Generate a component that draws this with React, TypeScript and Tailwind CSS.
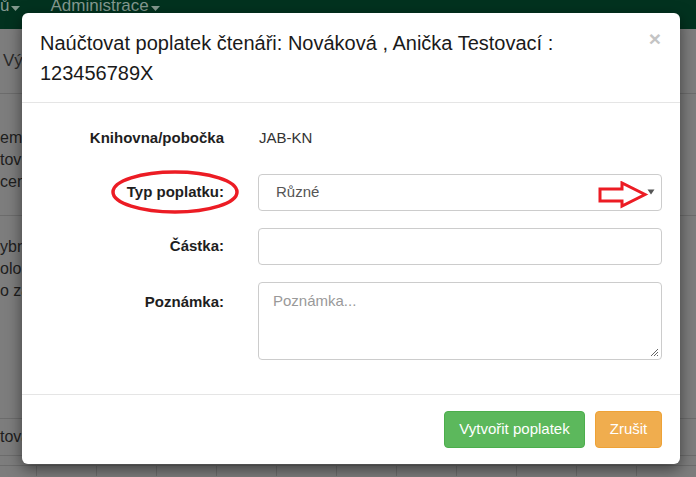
import React from "react";

function Caret() {
  return (
    <svg width="9" height="5" viewBox="0 0 9 5" className="ml-[2px] mt-[4px]">
      <path d="M0 0 L9 0 L4.5 5 Z" fill="#84998f" />
    </svg>
  );
}

export default function App() {
  const font = { fontFamily: '"Liberation Sans", Arial, sans-serif' };
  return (
    <div className="relative w-[696px] h-[477px] overflow-hidden bg-[#7d7d7d]" style={font}>
      {/* dimmed page behind the backdrop */}
      <div className="flex flex-col text-[15px] text-[#1e1e1e]">
        <div className="h-[33px] bg-[#02321f] flex items-start text-[#84998f] text-[17px] leading-[20px] -mt-[4px]">
          <span className="flex items-center">ů<Caret /></span>
          <span className="flex items-center ml-[30px]">Administrace<Caret /></span>
        </div>
        <div className="h-[65px] border-b border-[#6c6c6c] flex items-center pl-[3px] text-[17px] text-[#2a2a2a]">Výp</div>
        <div className="pt-[33px] pb-[22px] leading-[22px] border-b border-[#6c6c6c] text-[16px]">
          <div>em</div>
          <div>tov</div>
          <div>cen</div>
        </div>
        <div className="pt-[20px] h-[203px] leading-[22px] border-b border-[#6c6c6c] text-[16px]">
          <div>ybr</div>
          <div>olo</div>
          <div>o za</div>
        </div>
        <div className="h-[37px] flex items-center border-b border-[#6c6c6c] text-[16px]">tova</div>
        <div className="h-[10px] border-b border-[#6c6c6c]"></div>
        <div className="flex h-[10px] pl-[36px]">
          {[0, 1, 2, 3, 4, 5, 6, 7, 8, 9, 10].map((i) => (
            <div key={i} className="w-[64px] border-l border-[#6c6c6c]"></div>
          ))}
        </div>
      </div>

      {/* modal */}
      <div className="absolute left-[22px] top-[13px] w-[658px] h-[451px] bg-white rounded-[6px] shadow-[0_5px_15px_rgba(0,0,0,0.5)] flex flex-col">
        <div className="relative h-[90px] border-b border-[#e5e5e5] pl-[18px] pr-[40px] pt-[15px] text-[20px] leading-[30px] text-[#1a1a1a]">
          Naúčtovat poplatek čtenáři: Nováková , Anička Testovací : 123456789X
          <span className="absolute right-[19px] top-[14px] text-[21px] font-bold text-[#c4c4c4] leading-[24px]">×</span>
        </div>
        <div className="flex flex-col gap-[18px] pt-[17px] pr-[18px] text-[15px] text-[#333]">
          <div className="flex items-center h-[36px]">
            <div className="w-[202px] text-right font-bold text-[#1e1e1e]">Knihovna/pobočka</div>
            <div className="ml-[35px]">JAB-KN</div>
          </div>
          <div className="flex items-center h-[36px]">
            <div className="w-[202px] text-right font-bold text-[#1e1e1e]">Typ poplatku:</div>
            <div className="ml-[34px] flex-1 h-[37px] border border-[#ccc] rounded-[4px] flex items-center pl-[17px] pr-[6px] text-[#555]">
              <span className="flex-1">Různé</span>
              <svg width="8" height="6" viewBox="0 0 8 6"><path d="M0.5 0.5 L7.5 0.5 L4 5.5 Z" fill="#555" /></svg>
            </div>
          </div>
          <div className="flex items-center h-[36px]">
            <div className="w-[202px] text-right font-bold text-[#1e1e1e]">Částka:</div>
            <div className="ml-[34px] flex-1 h-[37px] border border-[#ccc] rounded-[4px]"></div>
          </div>
          <div className="flex items-start">
            <div className="w-[202px] text-right font-bold text-[#1e1e1e] pt-[9px]">Poznámka:</div>
            <div className="relative ml-[34px] flex-1 h-[78px] border border-[#ccc] rounded-[4px] pl-[14px] pt-[7px] text-[#999]">
              Poznámka...
              <svg className="absolute right-[2px] bottom-[2px]" width="9" height="9" viewBox="0 0 9 9">
                <path d="M1 8 L8 1 M4 8 L8 4 M7 8 L8 7" stroke="#666" strokeWidth="1" />
              </svg>
            </div>
          </div>
        </div>
        <div className="mt-auto h-[70px] border-t border-[#e5e5e5] flex items-center justify-end gap-[10px] pr-[18px]">
          <button className="w-[141px] h-[37px] rounded-[4px] bg-[#5cb85c] border border-[#4cae4c] text-white text-[15px]">Vytvořit poplatek</button>
          <button className="w-[67px] h-[37px] rounded-[4px] bg-[#f0ad4e] border border-[#eea236] text-white text-[15px]">Zrušit</button>
        </div>
      </div>

      {/* red annotations */}
      <svg className="absolute left-[110px] top-[169px]" width="131" height="46" viewBox="0 0 131 46">
        <ellipse cx="65" cy="23" rx="62" ry="20" fill="none" stroke="#ec1c24" strokeWidth="3.5" />
      </svg>
      <svg className="absolute left-[597px] top-[181px]" width="52" height="28" viewBox="0 0 52 28">
        <polygon points="3,8 25,8 25,2 48,13.5 25,25 25,20 3,20" fill="none" stroke="#ec1c24" strokeWidth="3" strokeLinejoin="miter" />
      </svg>
    </div>
  );
}
